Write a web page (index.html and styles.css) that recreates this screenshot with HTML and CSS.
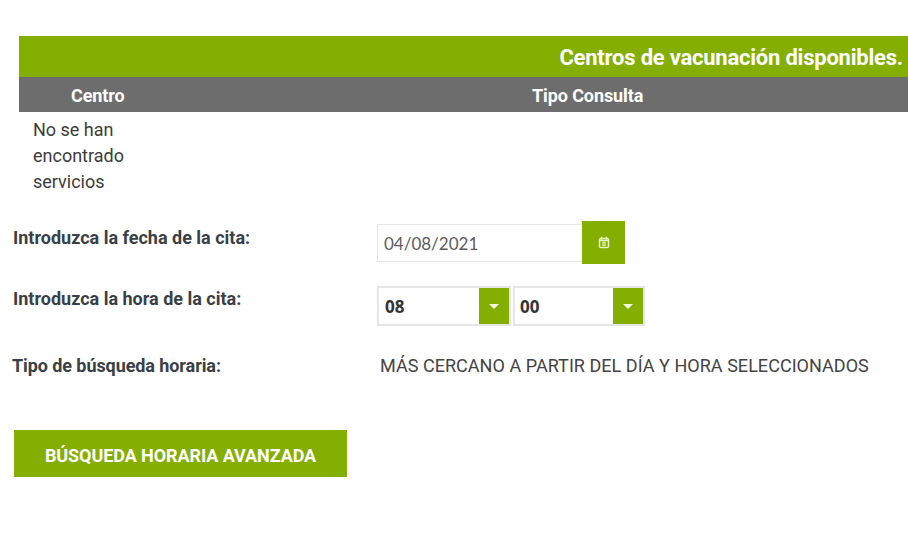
FILE: index.html
```html
<!DOCTYPE html>
<html lang="es">
<head>
<meta charset="utf-8">
<title>Centros de vacunación</title>
<link rel="stylesheet" href="styles.css">
</head>
<body>
<section class="centers">
  <h2 class="centers-title">Centros de vacunación disponibles.</h2>
  <div class="centers-head">
    <div class="col-center">Centro</div>
    <div class="col-type">Tipo Consulta</div>
  </div>
  <div class="centers-empty">No se han encontrado servicios</div>
</section>
<form class="form">
  <div class="row row-date">
    <label class="label">Introduzca la fecha de la cita:</label>
    <div class="date">
      <div class="date-input">04/08/2021</div>
      <button type="button" class="date-btn" aria-label="Calendario">
        <svg width="12" height="13" viewBox="0 0 12 13" fill="none" stroke="#eaf5c0" stroke-width="1.5">
          <rect x="1.5" y="2.4" width="9" height="9.2" rx="1.4"/>
          <path d="M3.6 .8v2.6M8.4 .8v2.6M1.5 4.6h9"/>
          <rect x="4.9" y="6.4" width="2.2" height="3" stroke-width="1.1"/>
        </svg>
      </button>
    </div>
  </div>
  <div class="row row-time">
    <label class="label">Introduzca la hora de la cita:</label>
    <div class="selects">
      <div class="select select-hour"><span class="select-value">08</span><span class="select-arrow"><i class="caret"></i></span></div>
      <div class="select select-minute"><span class="select-value">00</span><span class="select-arrow"><i class="caret"></i></span></div>
    </div>
  </div>
  <div class="row row-type">
    <label class="label label-type">Tipo de búsqueda horaria:</label>
    <div class="type-value">MÁS CERCANO A PARTIR DEL DÍA Y HORA SELECCIONADOS</div>
  </div>
  <button type="button" class="advanced">BÚSQUEDA HORARIA AVANZADA</button>
</form>
</body>
</html>
```
FILE: styles.css
```css
* { box-sizing: border-box; }
html, body { margin: 0; padding: 0; }
body {
  width: 908px;
  height: 556px;
  overflow: hidden;
  background: #fff;
  font-family: Roboto, "Liberation Sans", sans-serif;
  color: #333;
  padding-top: 36px;
}
.centers { margin-left: 19px; }
.centers-title {
  margin: 0;
  height: 41px;
  background: #84ae00;
  color: #fff;
  font-size: 22px;
  font-weight: 700;
  letter-spacing: -0.22px;
  line-height: 43px;
  text-align: right;
  padding-right: 5px;
  white-space: nowrap;
}
.centers-head {
  height: 35px;
  background: #6d6d6d;
  color: #fff;
  font-size: 18px;
  font-weight: 700;
  letter-spacing: -0.1px;
  line-height: 37px;
  display: flex;
}
.col-center { width: 54px; margin-left: 52px; white-space: nowrap; }
.col-type { margin-left: 407px; white-space: nowrap; }
.centers-empty {
  margin-left: 14px;
  margin-top: 5px;
  width: 110px;
  font-size: 18px;
  line-height: 26px;
  color: #3c3c3c;
}
.form { margin-top: 26px; padding-left: 13px; }
.row { display: grid; grid-template-columns: 364px auto; }
.label {
  font-size: 18px;
  font-weight: 700;
  color: #3a3f45;
  white-space: nowrap;
}
.label-type { letter-spacing: -0.08px; }
.row-date { height: 43px; line-height: 34px; }
.date { display: flex; align-items: center; }
.date-input {
  width: 205px;
  height: 38px;
  border: 1px solid #e6e6e6;
  border-right: 0;
  padding-left: 6px;
  font-family: Lato, sans-serif;
  font-size: 17px;
  line-height: 37px;
  color: #5c5c5c;
}
.date-btn {
  width: 43px;
  height: 43px;
  border: 0;
  padding: 0;
  background: #84ae00;
  display: flex;
  align-items: center;
  justify-content: center;
}
.row-time { margin-top: 22px; height: 40px; line-height: 26px; }
.selects { display: flex; gap: 2px; }
.select {
  height: 40px;
  border: 2px solid #e6e6e6;
  display: flex;
}
.select-hour { width: 134px; }
.select-minute { width: 132px; }
.select-value {
  flex: 1;
  padding-left: 6px;
  font-family: "Open Sans", sans-serif;
  font-size: 17px;
  font-weight: 700;
  line-height: 37px;
  color: #333;
}
.select-minute .select-value { padding-left: 5px; }
.select-arrow {
  width: 30px;
  background: #84ae00;
  display: flex;
  align-items: center;
  justify-content: center;
}
.caret {
  border-left: 5px solid transparent;
  border-right: 5px solid transparent;
  border-top: 5px solid #f4f8e2;
}
.row-type { margin-top: 28px; line-height: 24px; grid-template-columns: 368px auto; margin-left: -1px; }
.type-value { font-size: 18px; letter-spacing: 0.04px; color: #444; white-space: nowrap; }
.advanced {
  display: block;
  margin-top: 52px;
  margin-left: 1px;
  width: 333px;
  height: 47px;
  border: 0;
  background: #84ae00;
  color: #fff;
  font-family: Roboto, sans-serif;
  font-size: 18px;
  font-weight: 700;
  letter-spacing: -0.08px;
  padding: 3px 0 0;
}
```
